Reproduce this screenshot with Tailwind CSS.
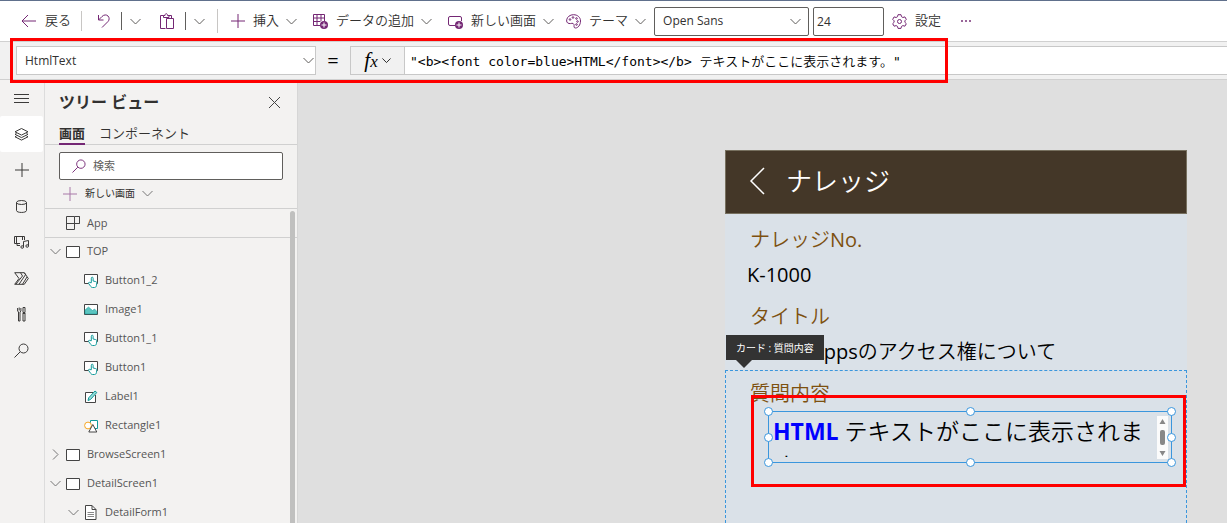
<!DOCTYPE html>
<html lang="ja">
<head>
    <meta charset="UTF-8">
    <meta name="viewport" content="width=device-width, initial-scale=1">
    <title>Power Apps Studio</title>
    <script src="https://cdn.jsdelivr.net/npm/@tailwindcss/browser@4"></script>
</head>
<body class="h-screen overflow-hidden flex flex-col bg-white text-[#323130] font-['Open_Sans','Noto_Sans_CJK_JP',sans-serif]">

    <!-- shared icons -->
    <svg class="hidden">
        <symbol id="chevron" viewBox="0 0 11 11"><path d="M.5 3l5 5 5-5" fill="none" stroke="currentColor"/></symbol>
        <symbol id="plus" viewBox="0 0 14 14"><path d="M7 0v14M0 7h14" fill="none" stroke="currentColor"/></symbol>
        <symbol id="search" viewBox="0 0 15 15"><circle cx="9.5" cy="5.5" r="4.5" fill="none" stroke="currentColor"/><path d="M6.2 8.8L.5 14.5" fill="none" stroke="currentColor"/></symbol>
        <symbol id="screen" viewBox="0 0 14 12"><path d="M.5 .5h13v11H.5z" fill="#fff" stroke="#444"/></symbol>
        <symbol id="button" viewBox="0 0 14 14">
            <path d="M.5 .5h13v9H.5z" fill="#fff" stroke="#444"/>
            <path d="M7.3 8.8V4.2c0-1.4 1.8-1.4 1.8 0V7l2.6.6c.9.2 1.2.7 1.1 1.5l-.4 2.6c-.2 1.2-.9 1.8-2 1.8H8.6c-.8 0-1.3-.3-1.7-.9L4.6 9.500c-.5-.9.5-1.600 1.300-1z" fill="#fff" stroke="#0f9a9a"/>
        </symbol>
    </svg>

    <!-- toolbar -->
    <header class="shrink-0 h-[42px] flex items-center pl-[21px] border-t border-t-[#60708c] border-b border-b-[#d0d0d0] text-[13px] font-[350] whitespace-nowrap">
        <button class="flex items-center gap-2">
            <svg class="w-4 h-4 text-[#742774]" viewBox="0 0 16 16" fill="none" stroke="currentColor"><path d="M1 8h14M7 2L1 8l6 6"/></svg>
            戻る
        </button>
        <span class="ml-[10px] w-px h-5 bg-[#c8c6c4]"></span>
        <button class="ml-[15px]" aria-label="元に戻す">
            <svg class="w-[14px] h-4 text-[#742774]" viewBox="0 0 14 16" fill="none" stroke="currentColor"><path d="M1.500 2v5h5M1.500 7L5 3.500c2-2 4.500-2 6-.5s1.500 4 0 5.500L5 14.500"/></svg>
        </button>
        <span class="ml-[10px] w-px h-[18px] bg-[#605e5c]"></span>
        <button class="ml-2" aria-label="元に戻すのオプション"><svg class="w-[11px] h-[11px] text-[#605e5c]"><use href="#chevron"/></svg></button>
        <button class="ml-[19px]" aria-label="貼り付け">
            <svg class="w-[14px] h-4 text-[#742774]" viewBox="0 0 14 16" fill="none" stroke="currentColor"><path d="M5.500 15.500h-5v-13h3M9 2.500h2.500V5M3.500 4.500v-2h1.500c0-2.500 2.500-2.500 2.500 0H9v2zM6.500 5.500h7v10h-7z"/></svg>
        </button>
        <span class="ml-[11px] w-px h-[18px] bg-[#605e5c]"></span>
        <button class="ml-2" aria-label="貼り付けのオプション"><svg class="w-[11px] h-[11px] text-[#605e5c]"><use href="#chevron"/></svg></button>
        <span class="ml-3 w-px h-6 bg-[#c8c6c4]"></span>
        <button class="ml-[13px] flex items-center gap-2">
            <svg class="w-[14px] h-[14px] text-[#742774]"><use href="#plus"/></svg>
            挿入
            <svg class="-ml-px w-[11px] h-[11px] text-[#605e5c]"><use href="#chevron"/></svg>
        </button>
        <button class="ml-4 flex items-center gap-2">
            <svg class="w-[15px] h-[15px] text-[#742774]" viewBox="0 0 15 15" fill="none" stroke="currentColor"><path d="M7 11.500H.5v-11h11V7M.5 4h11M.5 7.500h7M4 .5v11M8 .5V7"/><circle cx="11" cy="11" r="4" fill="currentColor" stroke="none"/><path stroke="#fff" d="M11 8.500v5M8.500 11h5"/></svg>
            データの追加
            <svg class="-ml-px w-[11px] h-[11px] text-[#605e5c]"><use href="#chevron"/></svg>
        </button>
        <button class="ml-4 flex items-center gap-2">
            <svg class="w-[15px] h-[15px] text-[#742774]" viewBox="0 0 15 15" fill="none" stroke="currentColor"><path d="M7 11.500H2A1.500 1.500 0 01.5 10V4A1.500 1.500 0 012 2.500h10A1.500 1.500 0 0113.500 4v3"/><circle cx="11" cy="11" r="4" fill="currentColor" stroke="none"/><path stroke="#fff" d="M11 8.500v5M8.500 11h5"/></svg>
            新しい画面
            <svg class="-ml-px w-[11px] h-[11px] text-[#605e5c]"><use href="#chevron"/></svg>
        </button>
        <button class="ml-3 flex items-center gap-2">
            <svg class="w-[15px] h-[15px] text-[#742774]" viewBox="0 0 15 15" fill="none" stroke="currentColor"><path d="M7.500 .7c4 0 7 2.600 7 6.300 0 4-2.500 7-5 7-2.300 0-1-2.300-1.600-3.700C7 8.300 5 10 3 9.500.8 9 .5 7.500.7 5.800 1.200 2.800 4 .7 7.500.7z"/><circle cx="4" cy="5.500" r=".8"/><circle cx="7" cy="3.500" r=".8"/><circle cx="10.500" cy="4.500" r=".8"/><circle cx="11.500" cy="7.500" r=".8"/><circle cx="10.500" cy="10.500" r=".8"/></svg>
            テーマ
            <svg class="-ml-px w-[11px] h-[11px] text-[#605e5c]"><use href="#chevron"/></svg>
        </button>
        <div class="ml-2 relative">
            <select aria-label="フォント" class="appearance-none block w-[155px] h-[29px] px-2 border border-[#605e5c] rounded-[2px] bg-white text-[12px] font-normal">
                <option>Open Sans</option>
            </select>
            <svg class="absolute right-2 top-[9px] w-[11px] h-[11px] text-[#605e5c] pointer-events-none"><use href="#chevron"/></svg>
        </div>
        <input aria-label="フォント サイズ" value="24" class="ml-1 w-[71px] h-[29px] px-[3px] border border-[#605e5c] rounded-[2px] text-[12px] font-normal">
        <button class="ml-2 flex items-center gap-2">
            <svg class="w-[15px] h-[15px] text-[#742774]" viewBox="0 0 15 15" fill="none" stroke="currentColor"><path d="M6 .7h3l.5 2 1.400.8 2-.6 1.400 2.500-1.400 1.400v1.500l1.400 1.400-1.400 2.500-2-.6-1.400.8-.5 2H6l-.5-2-1.400-.8-2 .6L.7 9.700l1.400-1.400V6.800L.7 5.400l1.400-2.500 2 .6 1.400-.8z"/><circle cx="7.500" cy="7.500" r="2"/></svg>
            設定
        </button>
        <button class="ml-5" aria-label="その他">
            <svg class="w-[10px] h-[2px] text-[#9a669a]" viewBox="0 0 10 2" fill="currentColor"><path d="M0 0h2v2H0zM4 0h2v2H4zM8 0h2v2H8z"/></svg>
        </button>
    </header>

    <!-- formula bar -->
    <div class="relative shrink-0 h-[38px] flex items-center pl-4 bg-[#f1f1f1] border-b border-[#d0d0d0]">
        <div class="relative">
            <select aria-label="プロパティ" class="appearance-none block w-[300px] h-[29px] px-2 border border-[#c8c8c8] bg-white text-[12px]">
                <option>HtmlText</option>
            </select>
            <svg class="absolute right-[2px] top-[9px] w-[11px] h-[11px] text-[#605e5c] pointer-events-none"><use href="#chevron"/></svg>
        </div>
        <span class="w-[34px] text-center text-[20px] leading-7 text-black">=</span>
        <button class="w-[54px] h-[29px] flex items-center justify-center gap-1 border border-r-0 border-[#c8c8c8] text-black">
            <span class="font-['Liberation_Serif',serif] italic text-[21px] leading-5">f<span class="text-[17px]">x</span></span>
            <svg class="w-[9px] h-[9px]"><use href="#chevron"/></svg>
        </button>
        <input aria-label="数式" value="&quot;&lt;b&gt;&lt;font color=blue&gt;HTML&lt;/font&gt;&lt;/b&gt; テキストがここに表示されます。&quot;" class="flex-1 min-w-0 h-[29px] px-[5px] bg-white border border-r-0 border-[#c8c8c8] text-black text-[13px] font-[350] font-['DejaVu_Sans_Mono','Noto_Sans_CJK_JP',monospace]">
        <div class="absolute z-10 left-[10px] -top-1 w-[938px] h-[45px] border-3 border-[#f00] pointer-events-none"></div>
    </div>

    <div class="flex-1 min-h-0 flex">
        <!-- left rail -->
        <nav class="shrink-0 w-[45px] bg-[#f3f2f1] border-r border-[#dcdcdc] text-[#3b3a39]">
            <button class="w-[43px] h-9 flex items-center justify-center" aria-label="メニュー">
                <svg class="w-[15px] h-[15px]" viewBox="0 0 15 15" fill="none" stroke="currentColor"><path d="M0 3.500h15M0 7.500h15M0 11.500h15"/></svg>
            </button>
            <button class="w-[43px] h-9 flex items-center justify-center bg-white rounded-[2px]" aria-label="ツリー ビュー">
                <svg class="w-[15px] h-[15px]" viewBox="0 0 15 15" fill="none" stroke="currentColor"><path d="M7.500 1.500l6.500 3.300-6.500 3.300L1 4.800zM2.500 6.500L1 7.300l6.500 3.300L14 7.300l-1.500-.8M2.500 9L1 9.800l6.500 3.300L14 9.800 12.500 9"/></svg>
            </button>
            <button class="w-[43px] h-9 flex items-center justify-center" aria-label="挿入">
                <svg class="w-[14px] h-[14px]"><use href="#plus"/></svg>
            </button>
            <button class="w-[43px] h-9 flex items-center justify-center" aria-label="データ">
                <svg class="w-[11px] h-[13px]" viewBox="0 0 11 13" fill="none" stroke="currentColor"><ellipse cx="5.500" cy="2.500" rx="5" ry="2"/><path d="M.5 2.500v8c0 2.600 10 2.600 10 0v-8"/></svg>
            </button>
            <button class="w-[43px] h-9 flex items-center justify-center" aria-label="メディア">
                <svg class="w-[15px] h-[13px]" viewBox="0 0 15 13" fill="none" stroke="currentColor"><path d="M6 7.500H.5v-7h10V4M2.500 .5v7M8.500 .5V4M3 7.500v2h3M9.500 11V5.500l5-1V10"/><circle cx="8.200" cy="11" r="1.300"/><circle cx="13.200" cy="10" r="1.300"/></svg>
            </button>
            <button class="w-[43px] h-9 flex items-center justify-center" aria-label="Power Automate">
                <svg class="w-[15px] h-[13px]" viewBox="0 0 15 13" fill="none" stroke="currentColor"><path d="M.7 .7h9.600l4 5.800-4 5.800H.7L5 6.500zM6.500 .7L8.500 4 2 12M10.300 .7l1.200 2L5 12.300M8.500 12.300L13 5"/></svg>
            </button>
            <button class="w-[43px] h-9 flex items-center justify-center" aria-label="ツール">
                <svg class="w-[9px] h-[15px]" viewBox="0 0 9 15" fill="none" stroke="currentColor"><path d="M.6 1v3l.9 1v9h1.500V5l.9-1V1M2.200 .5v3M6 .5h2v5H6zM5.500 6.500h3M6 7v7h2V7"/></svg>
            </button>
            <button class="w-[43px] h-9 flex items-center justify-center" aria-label="検索">
                <svg class="w-[15px] h-[15px]"><use href="#search"/></svg>
            </button>
        </nav>

        <!-- tree view -->
        <aside class="relative shrink-0 w-[253px] bg-[#f3f2f1] border-r border-[#d6d6d6] text-[11px]">
            <div class="h-11 pl-[14px] pr-[17px] flex items-center justify-between">
                <h2 class="text-[16px] font-bold">ツリー ビュー</h2>
                <button aria-label="閉じる">
                    <svg class="w-[11px] h-[11px]" viewBox="0 0 11 11" stroke="#444"><path d="M0 0l11 11M11 0L0 11"/></svg>
                </button>
            </div>
            <div class="h-[21px] pl-[14px] flex gap-[14px] border-b border-[#d0d0d0] text-[13px] leading-[18px]">
                <button class="h-[21px] pb-px font-bold border-b-2 border-[#742774]">画面</button>
                <button class="h-[21px] pb-[3px] font-[350]">コンポーネント</button>
            </div>
            <label class="mt-[7px] ml-[14px] mr-[14px] h-7 flex items-center gap-[7px] px-3 bg-white border border-[#605e5c] rounded-[2px]">
                <svg class="w-[14px] h-[14px] text-[#742774]"><use href="#search"/></svg>
                <input type="search" aria-label="検索" placeholder="検索" class="flex-1 min-w-0 outline-none placeholder:text-[#605e5c]">
            </label>
            <button class="h-[27px] pl-[18px] flex items-center gap-2 text-[10px]">
                <svg class="w-[14px] h-[14px] text-[#a878a8]"><use href="#plus"/></svg>
                新しい画面
                <svg class="-ml-px w-[11px] h-[11px] text-[#777]"><use href="#chevron"/></svg>
            </button>
            <div class="mt-px h-[30px] pl-[21px] flex items-center gap-[7px] border-y border-[#d0d0d0] text-[#555]">
                <svg class="w-[14px] h-[14px]" viewBox="0 0 14 14" fill="none" stroke="#444"><path d="M.5 .5h8v13h-8zM.5 7.500h13v-7h-5M13.500 .5v7"/></svg>
                App
            </div>
            <ul class="-mt-px text-[#555]">
                <li class="h-[29px] pl-[5px] flex items-center gap-[7px]">
                    <svg class="w-[11px] h-[11px] text-[#777] -mr-[2px]"><use href="#chevron"/></svg>
                    <svg class="w-[14px] h-3"><use href="#screen"/></svg>TOP
                </li>
                <li class="h-[29px] pl-[39px] flex items-center gap-[7px]"><svg class="w-[14px] h-[14px]"><use href="#button"/></svg>Button1_2</li>
                <li class="h-[29px] pl-[39px] flex items-center gap-[7px]">
                    <svg class="w-[14px] h-[11px]" viewBox="0 0 14 11"><path d="M.5 .5h13v10H.5z" fill="#fff" stroke="#444"/><path d="M1 6l3.500-3 4 3.500L10.500 5 13 7.500V10H1z" fill="#5cc5c0" stroke="#0f9a9a" stroke-width=".5"/></svg>Image1
                </li>
                <li class="h-[29px] pl-[39px] flex items-center gap-[7px]"><svg class="w-[14px] h-[14px]"><use href="#button"/></svg>Button1_1</li>
                <li class="h-[29px] pl-[39px] flex items-center gap-[7px]"><svg class="w-[14px] h-[14px]"><use href="#button"/></svg>Button1</li>
                <li class="h-[29px] pl-[39px] flex items-center gap-[7px]">
                    <svg class="w-[14px] h-[14px]" viewBox="0 0 14 14"><path d="M9 2.500H1.500v10h10V5" fill="#fff" stroke="#444"/><path d="M4 10.500l.7-2.700L11 1l1.800 1.500L6.500 9.500z" fill="#9adbd8" stroke="#0f9a9a"/></svg>Label1
                </li>
                <li class="h-[29px] pl-[39px] flex items-center gap-[7px]">
                    <svg class="w-[14px] h-[14px]" viewBox="0 0 14 14"><path d="M6.500 1.500h7v8h-7z" fill="#fff" stroke="#0f9a9a"/><circle cx="4" cy="6.500" r="3.400" fill="#fff" stroke="#f5a623"/><path d="M8.800 5.500l4 7.500h-8z" fill="#fff" stroke="#444"/></svg>Rectangle1
                </li>
                <li class="h-[29px] pl-[5px] flex items-center gap-[7px]">
                    <svg class="w-[11px] h-[11px] text-[#777] -mr-[2px] -rotate-90"><use href="#chevron"/></svg>
                    <svg class="w-[14px] h-3"><use href="#screen"/></svg>BrowseScreen1
                </li>
                <li class="h-[29px] pl-[5px] flex items-center gap-[7px]">
                    <svg class="w-[11px] h-[11px] text-[#777] -mr-[2px]"><use href="#chevron"/></svg>
                    <svg class="w-[14px] h-3"><use href="#screen"/></svg>DetailScreen1
                </li>
                <li class="h-[29px] pl-[23px] flex items-center gap-[7px]">
                    <svg class="w-[11px] h-[11px] text-[#777] -mr-[2px]"><use href="#chevron"/></svg>
                    <svg class="w-[14px] h-[15px]" viewBox="0 0 14 15"><path d="M1.500 .5H8l4 4v10H1.500z" fill="#fff" stroke="#444"/><path d="M8 .5v4h4" fill="none" stroke="#444"/><path d="M3.500 7.500H10M3.500 9.500H10M3.500 11.500H10" stroke="#888"/></svg>DetailForm1
                </li>
            </ul>
            <div class="absolute right-[2px] top-[131px] bottom-0 w-[5px] rounded-t-full bg-[#c0c0bf]"></div>
        </aside>

        <!-- canvas -->
        <main class="flex-1 min-w-0 flex justify-end bg-[#dfdfdf] pt-[70px] pr-10">
            <div class="w-[462px] flex flex-col bg-[#dae1e8] text-[20px] leading-7 text-black">
                <div class="shrink-0 h-16 mb-[2px] pb-[2px] pl-[23px] flex items-center gap-[21px] bg-[#443728] border border-[#77705f] text-white text-[26px]">
                    <svg class="w-4 h-7" viewBox="0 0 16 28" fill="none" stroke="#fff" stroke-width="1.500"><path d="M15 1L2 14l13 13"/></svg>
                    <h1 class="font-[350]">ナレッジ</h1>
                </div>
                <section class="shrink-0 h-[77px] pt-[10px] pl-[22px]">
                    <h3 class="pl-[3px] text-[#7d500f] font-[350]">ナレッジ<span class="font-normal">No.</span></h3>
                    <p class="mt-[7px]">K-1000</p>
                </section>
                <section class="shrink-0 h-[77px] pt-[10px] pl-[22px]">
                    <h3 class="pl-[3px] text-[#7d500f] font-[350]">タイトル</h3>
                    <p class="mt-[7px] font-[350]"><span class="font-normal">Power Apps</span>のアクセス権について</p>
                </section>
                <section class="relative flex-1 pt-[9px] px-[14px] border border-b-0 border-dashed border-[#3a96dd]">
                    <h3 class="pl-[10px] text-[#7d500f] font-[350]">質問内容</h3>
                    <div class="absolute left-0 -top-[36px] h-[25px] px-[10px] flex items-center bg-[#333] text-white text-[10px] whitespace-nowrap">
                        カード : 質問内容
                        <svg class="absolute left-[10px] top-[25px] w-4 h-2" viewBox="0 0 16 8"><path d="M0 0h16L8 8z" fill="#333"/></svg>
                    </div>
                    <!-- selected HTML text control -->
                    <div class="relative ml-[28px] mt-[3px] h-[52px] border border-[#3a96dd]">
                        <div class="h-[45px] pl-1 pr-[16px] pt-[2px] overflow-hidden text-[23px] leading-[34px] font-[350]">
                            <b class="font-bold text-[#00f]">HTML</b> テキストがここに表示されます。
                        </div>
                        <div class="absolute right-[3px] top-1 w-[11px] h-[43px] bg-[#fbfbfb]">
                            <svg class="w-[11px] h-[43px]" viewBox="0 0 11 43" fill="#888"><path d="M2.500 8h6l-3-5zM2.500 35h6l-3 5z"/><rect x="3" y="14" width="5" height="15" rx="2"/></svg>
                        </div>
                        <span class="absolute -left-[5px] -top-[5px] size-[9px] rounded-full bg-white border border-[#3a96dd]"></span>
                        <span class="absolute left-1/2 -ml-1 -top-[5px] size-[9px] rounded-full bg-white border border-[#3a96dd]"></span>
                        <span class="absolute -right-[5px] -top-[5px] size-[9px] rounded-full bg-white border border-[#3a96dd]"></span>
                        <span class="absolute -left-[5px] top-[21px] size-[9px] rounded-full bg-white border border-[#3a96dd]"></span>
                        <span class="absolute -right-[5px] top-[21px] size-[9px] rounded-full bg-white border border-[#3a96dd]"></span>
                        <span class="absolute -left-[5px] -bottom-[5px] size-[9px] rounded-full bg-white border border-[#3a96dd]"></span>
                        <span class="absolute left-1/2 -ml-1 -bottom-[5px] size-[9px] rounded-full bg-white border border-[#3a96dd]"></span>
                        <span class="absolute -right-[5px] -bottom-[5px] size-[9px] rounded-full bg-white border border-[#3a96dd]"></span>
                    </div>
                    <div class="absolute left-[25px] right-0 top-[24px] h-[92px] border-3 border-[#f00] pointer-events-none"></div>
                </section>
            </div>
        </main>
    </div>
</body>
</html>
